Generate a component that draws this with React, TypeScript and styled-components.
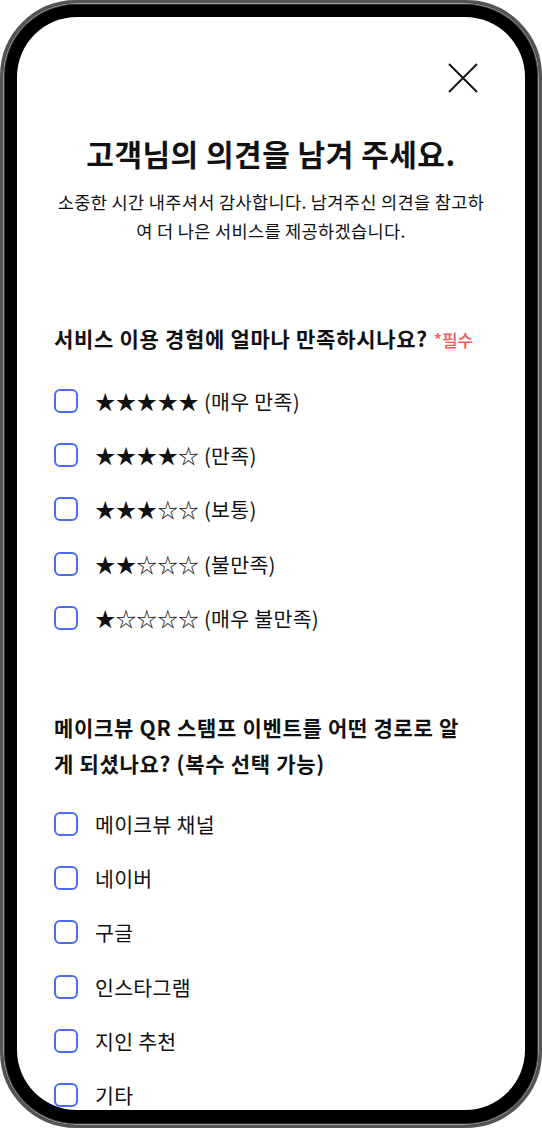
import React from "react";
import styled, { createGlobalStyle } from "styled-components";

const GlobalStyle = createGlobalStyle`
  html, body {
    margin: 0;
    padding: 0;
    background: #fff;
  }
  body {
    font-family: "Noto Sans CJK KR", "Noto Sans", sans-serif;
    color: #111;
  }
`;

const Phone = styled.div`
  box-sizing: border-box;
  width: 542px;
  height: 1128px;
  border-radius: 76px;
  background: #000;
  border: 3px solid #555;
  box-shadow: inset 0 0 0 1px #9a9a9a, inset 0 0 0 2px #2a2a2a;
  padding: 14px 14px 15px;
`;

const Screen = styled.div`
  box-sizing: border-box;
  height: 100%;
  background: #fff;
  border-radius: 60px;
  overflow: hidden;
  padding: 0 37px;
`;

const CloseRow = styled.div`
  display: flex;
  justify-content: flex-end;
  padding: 46px 10px 0 0;
`;

const CloseButton = styled.button`
  width: 30px;
  height: 30px;
  padding: 0;
  border: none;
  background: none;
  display: flex;
  cursor: pointer;
`;

const Title = styled.h1`
  margin: 40px 0 0;
  font-size: 30px;
  line-height: 40px;
  font-weight: 700;
  text-align: center;
  letter-spacing: 0.5px;
`;

const Subtitle = styled.p`
  margin: 14px 0 0;
  font-size: 17.6px;
  line-height: 29px;
  font-weight: 400;
  text-align: center;
  letter-spacing: 0.3px;
`;

const Section = styled.section<{ $gap: number }>`
  margin-top: ${({ $gap }) => $gap}px;
`;

const Question = styled.h2<{ $maxWidth?: number }>`
  margin: 0 0 16px;
  font-size: 21px;
  line-height: 36px;
  font-weight: 600;
  letter-spacing: 0.7px;
  max-width: ${({ $maxWidth }) => ($maxWidth ? `${$maxWidth}px` : "none")};
`;

const Required = styled.span`
  margin-left: 6px;
  font-size: 17px;
  font-weight: 500;
  letter-spacing: 0;
  color: #f4585c;
`;

const OptionList = styled.ul`
  list-style: none;
  margin: 0;
  padding: 0;
`;

const OptionRow = styled.li`
  display: flex;
  align-items: center;
  gap: 17px;
  height: 54.2px;
`;

const Box = styled.span`
  box-sizing: border-box;
  flex: none;
  width: 24px;
  height: 24px;
  border: 2px solid #4b6bf6;
  border-radius: 6px;
  background: #fff;
`;

const Label = styled.span`
  font-size: 20.5px;
  line-height: 28px;
  font-weight: 400;
  letter-spacing: 0.3px;
`;

const ratings = [
  "★★★★★ (매우 만족)",
  "★★★★☆ (만족)",
  "★★★☆☆ (보통)",
  "★★☆☆☆ (불만족)",
  "★☆☆☆☆ (매우 불만족)",
];

const channels = ["메이크뷰 채널", "네이버", "구글", "인스타그램", "지인 추천", "기타"];

function Option({ label }: { label: string }) {
  return (
    <OptionRow>
      <Box />
      <Label>{label}</Label>
    </OptionRow>
  );
}

export default function App() {
  return (
    <>
      <GlobalStyle />
      <Phone>
        <Screen>
          <CloseRow>
            <CloseButton aria-label="닫기">
              <svg width="30" height="30" viewBox="0 0 30 30">
                <path d="M1 1L29 29M29 1L1 29" stroke="#111" strokeWidth="1.9" />
              </svg>
            </CloseButton>
          </CloseRow>
          <Title>고객님의 의견을 남겨 주세요.</Title>
          <Subtitle>
            소중한 시간 내주셔서 감사합니다. 남겨주신 의견을 참고하여 더 나은 서비스를 제공하겠습니다.
          </Subtitle>

          <Section $gap={75}>
            <Question>
              서비스 이용 경험에 얼마나 만족하시나요?<Required>*필수</Required>
            </Question>
            <OptionList>
              {ratings.map((r) => (
                <Option key={r} label={r} />
              ))}
            </OptionList>
          </Section>

          <Section $gap={64}>
            <Question $maxWidth={416}>
              메이크뷰 QR 스탬프 이벤트를 어떤 경로로 알게 되셨나요? (복수 선택 가능)
            </Question>
            <OptionList>
              {channels.map((c) => (
                <Option key={c} label={c} />
              ))}
            </OptionList>
          </Section>
        </Screen>
      </Phone>
    </>
  );
}
